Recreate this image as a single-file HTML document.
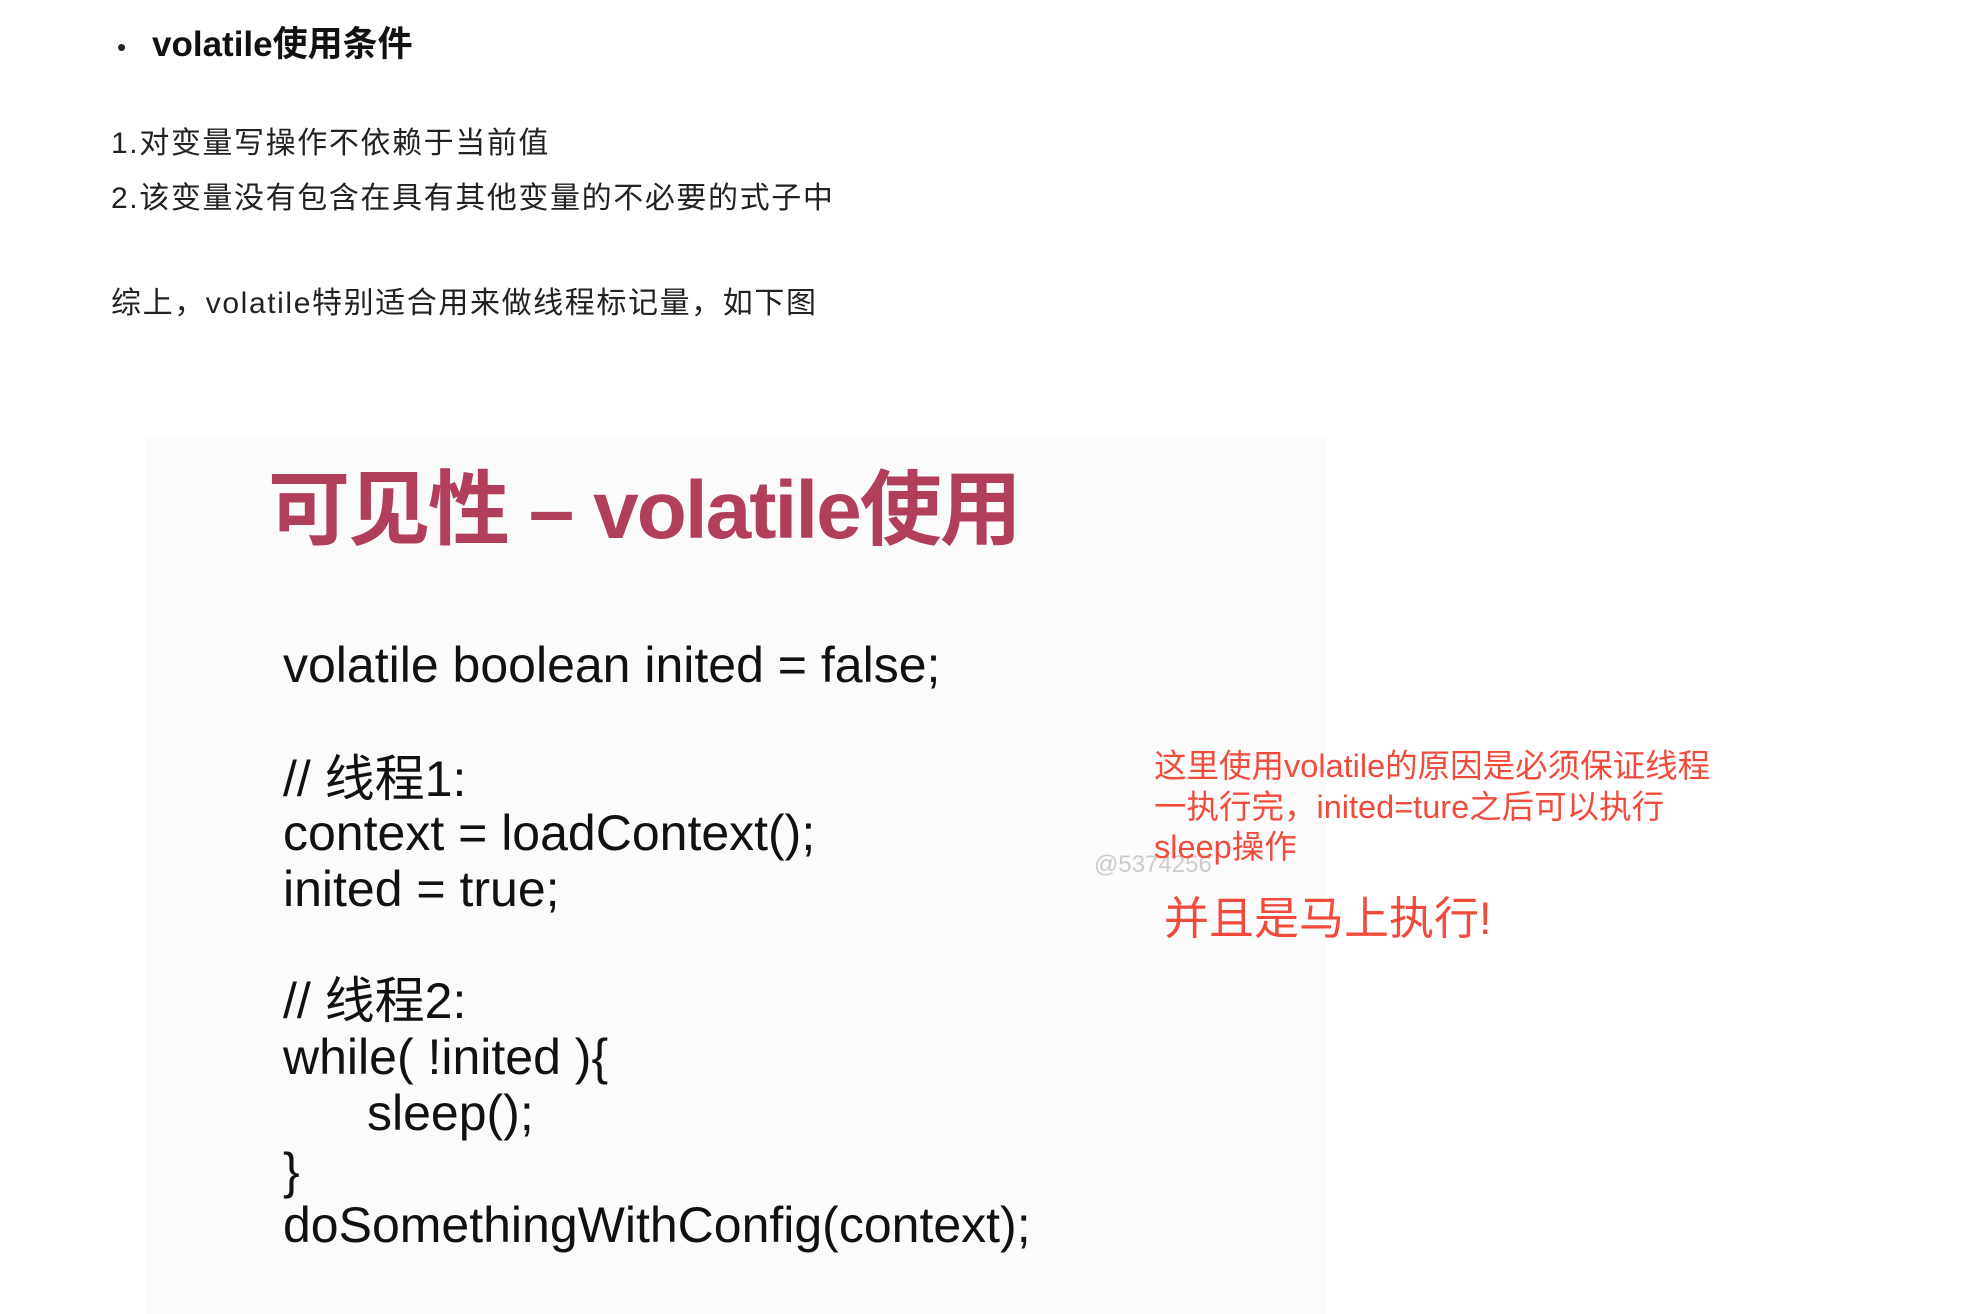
<!DOCTYPE html>
<html><head><meta charset="utf-8"><style>
body{margin:0;width:1964px;height:1314px;background:#fff;position:relative;overflow:hidden;font-family:"Liberation Sans","Noto Sans CJK SC",sans-serif;color:#222}
.a{position:absolute;white-space:nowrap;line-height:1}
.img{position:absolute;left:146px;top:437px;width:1180px;height:877px;background:#fbfbfb}
.code{font-size:50px;color:#111;left:283px}
.red{color:#f24b3c;font-size:32.5px;left:1154px}
.t{font-size:30px;letter-spacing:1.6px;left:111px}
</style></head><body>
<div class="a" style="left:117px;top:34px;font-size:26px">•</div>
<div class="a" style="left:152px;top:27px;font-size:35px;font-weight:bold;color:#111">volatile使用条件</div>
<div class="a t" style="top:129px">1.对变量写操作不依赖于当前值</div>
<div class="a t" style="top:184px">2.该变量没有包含在具有其他变量的不必要的式子中</div>
<div class="a t" style="top:289px">综上，volatile特别适合用来做线程标记量，如下图</div>
<div class="img"></div>
<div class="a" style="left:268px;top:470px;font-size:82px;font-weight:bold;color:#b13f5c;letter-spacing:-2px">可见性 – volatile使用</div>
<div class="a code" style="top:640px">volatile boolean inited = false;</div>
<div class="a code" style="top:754px">// 线程1:</div>
<div class="a code" style="top:808px">context = loadContext();</div>
<div class="a code" style="top:864px">inited = true;</div>
<div class="a code" style="top:976px">// 线程2:</div>
<div class="a code" style="top:1032px">while( !inited ){</div>
<div class="a code" style="top:1088px;left:367px">sleep();</div>
<div class="a code" style="top:1146px">}</div>
<div class="a code" style="top:1200px">doSomethingWithConfig(context);</div>
<div class="a" style="left:1094px;top:853px;font-size:24px;color:#ccc">@5374256</div>
<div class="a red" style="top:750px">这里使用volatile的原因是必须保证线程</div>
<div class="a red" style="top:791px">一执行完，inited=ture之后可以执行</div>
<div class="a red" style="top:831px">sleep操作</div>
<div class="a" style="left:1164px;top:896px;font-size:45px;color:#f24b3c">并且是马上执行!</div>
</body></html>
